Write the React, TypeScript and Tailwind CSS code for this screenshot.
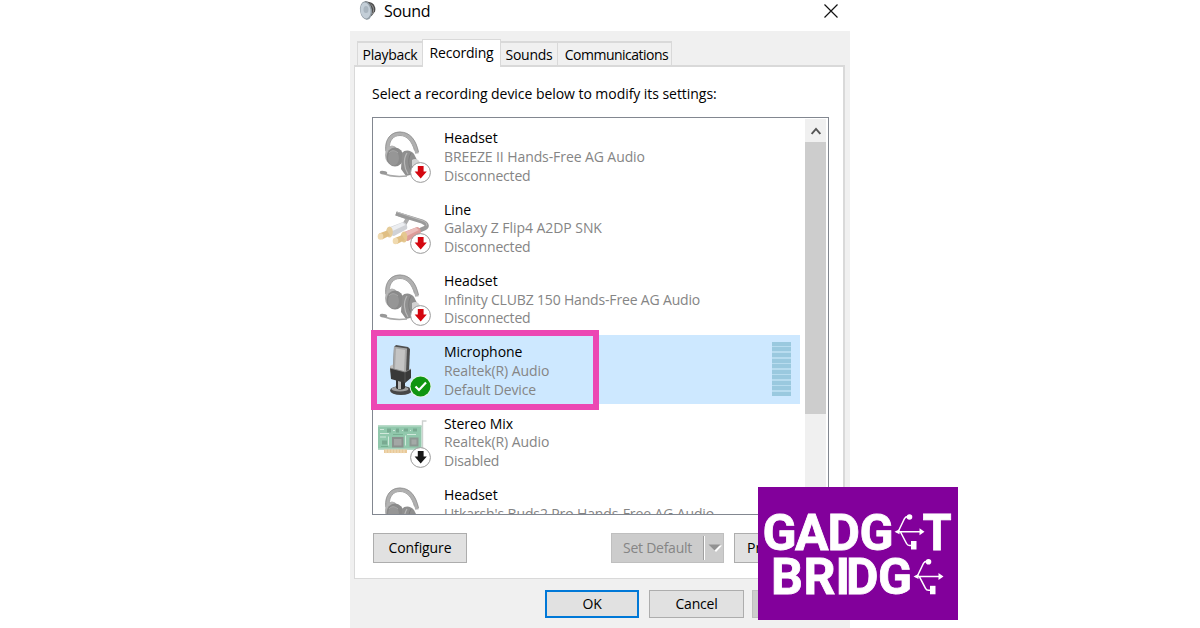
import React from 'react';

type DeviceIcon = 'headset' | 'line' | 'microphone' | 'card';
type DeviceStatus = 'disconnected' | 'default' | 'disabled';

interface Device {
  name: string;
  driver: string;
  state: string;
  icon: DeviceIcon;
  status?: DeviceStatus;
  driverTracking: string;
}

const devices: Device[] = [
  {
    name: 'Headset',
    driver: 'BREEZE II Hands-Free AG Audio',
    state: 'Disconnected',
    icon: 'headset',
    status: 'disconnected',
    driverTracking: 'tracking-[-0.09px]',
  },
  {
    name: 'Line',
    driver: 'Galaxy Z Flip4 A2DP SNK',
    state: 'Disconnected',
    icon: 'line',
    status: 'disconnected',
    driverTracking: 'tracking-[-0.06px]',
  },
  {
    name: 'Headset',
    driver: 'Infinity CLUBZ 150 Hands-Free AG Audio',
    state: 'Disconnected',
    icon: 'headset',
    status: 'disconnected',
    driverTracking: 'tracking-[-0.17px]',
  },
  {
    name: 'Microphone',
    driver: 'Realtek(R) Audio',
    state: 'Default Device',
    icon: 'microphone',
    status: 'default',
    driverTracking: 'tracking-[-0.08px]',
  },
  {
    name: 'Stereo Mix',
    driver: 'Realtek(R) Audio',
    state: 'Disabled',
    icon: 'card',
    status: 'disabled',
    driverTracking: 'tracking-[-0.08px]',
  },
  {
    name: 'Headset',
    driver: "Utkarsh's Buds2 Pro Hands-Free AG Audio",
    state: 'Disconnected',
    icon: 'headset',
    driverTracking: 'tracking-[-0.12px]',
  },
];

const HeadsetArt = () => (
  <g>
    <path d="M9.500 24C8 12 14 5.500 22 5.500c9 0 15 8 17 20" fill="none" stroke="#b0b0b0" strokeWidth="3.600" />
    <path d="M7.800 23C6.500 11 13 4 22 4c10 0 16 8 18.500 20" fill="none" stroke="#8b8b8b" strokeWidth="0.800" />
    <path d="M11.500 20C11 13 15 7.500 22 7.500c7 0 12 6 14.500 15" fill="none" stroke="#8f8f8f" strokeWidth="0.800" />
    <ellipse cx="14" cy="27" rx="7" ry="9.500" fill="#b3b3b3" />
    <ellipse cx="17" cy="29" rx="8.500" ry="9.500" fill="#8a8a8a" />
    <ellipse cx="15.500" cy="30" rx="5.500" ry="7.500" fill="#969696" />
    <path d="M11 25c2-3 6-3 9 0" fill="none" stroke="#a8a8a8" strokeWidth="1" />
    <path d="M24 25c3-4 9-3 12 1l3 6-3 14-8 2-5-7z" fill="#8f8f8f" />
    <path d="M29 25c-4 6-3 15 1 21" fill="none" stroke="#b8b8b8" strokeWidth="1.200" />
    <path d="M33 25c-3 5-3 12 0 17" fill="none" stroke="#7c7c7c" strokeWidth="0.900" />
    <path d="M34 32c3-2 7-1 8 3v4l-8-1z" fill="#d3d3d3" />
    <path d="M5 45c7 4 14 4 24 3" fill="none" stroke="#a9a9a9" strokeWidth="1.500" />
    <ellipse cx="5.500" cy="44.700" rx="3.800" ry="1.800" fill="#989898" transform="rotate(8 5.500 44.700)" />
  </g>
);

const LineArt = () => (
  <g>
    <path d="M18 14.500l12 4.500-4 7" fill="none" stroke="#ababab" strokeWidth="4" strokeLinejoin="round" />
    <path d="M18 14.500l26 8c5 2 6 5 3 6.500l-9 4" fill="none" stroke="#9a9a9a" strokeWidth="4.200" strokeLinejoin="round" />
    <path d="M19 13l25 8.500c4 1.500 5 3 4.500 5" fill="none" stroke="#bdbdbd" strokeWidth="1" />
    <path d="M12 28l13-5c3 0 5 4 4 7l-13 7c-4 0-6-6-4-9z" fill="#d0d2d6" />
    <path d="M12.500 28.500l12-5 3 2.500-13 6z" fill="#eceef1" />
    <path d="M26 33l13-5c3 0 5 4 3 7l-12 7c-5 0-6-6-4-9z" fill="#dd9b98" />
    <path d="M27 33l11-4.500 3 2.500-12 6z" fill="#ebbdba" />
    <ellipse cx="11.500" cy="33" rx="3.300" ry="5.500" fill="#e5cc9a" />
    <path d="M1 34.500l8-3 3 5-8 4z" fill="#e0bf83" />
    <ellipse cx="2.500" cy="37.500" rx="2.800" ry="3.200" fill="#f0dab0" />
    <ellipse cx="26" cy="38" rx="3.300" ry="5.500" fill="#e5c890" />
    <path d="M17 39l7-3 3 5-8 4z" fill="#e0bf83" />
    <ellipse cx="17.500" cy="42" rx="2.800" ry="3.200" fill="#f0dab0" />
  </g>
);

const MicrophoneArt = () => (
  <g>
    <ellipse cx="23" cy="48.500" rx="11" ry="4.500" fill="#474747" />
    <ellipse cx="22" cy="47" rx="8.500" ry="2.500" fill="#9d9d9d" />
    <path d="M18 38h9v8c-2 2-7 2-9 0z" fill="#303030" />
    <path d="M20 39h3v8h-3z" fill="#b5b5b5" />
    <path d="M12 24l4-2v10l-4-2z" fill="#c3c3c3" />
    <path d="M16 5l2-2 12 2 2 2-1 23-4 2-12-3z" fill="#4f4f4f" />
    <path d="M16 4.500l13 2-1 24-13-3z" fill="#a8a8a8" />
    <path d="M18 6.500l9 1.400-1 21-9-2z" fill="#c4c4c4" />
    <path d="M12 26l15 4 6-3v9l-6 5-14-4z" fill="#393939" />
    <path d="M12 26l15 4 6-3" fill="none" stroke="#8e8e8e" strokeWidth="0.800" />
    <path d="M27 30v10" stroke="#5c5c5c" strokeWidth="0.800" />
  </g>
);

const CardArt = () => (
  <g transform="translate(0 3.5)">
    <path d="M44.500 36V4.500h4" fill="none" stroke="#cdd1cf" strokeWidth="1.400" />
    <path d="M0 9h43.500v24H0z" fill="#91c8ac" />
    <path d="M0 9h43.500v1.500H0zM0 31.500h43.500V33H0z" fill="#a9d3bd" />
    <path d="M6 33h23v3.500H6z" fill="#e9c998" />
    <path d="M8 33v4M11 33v4M14 33v4M17 33v4M20 33v4M23 33v4M26 33v4" stroke="#f7ead2" strokeWidth="0.700" />
    <path d="M14 20.500h11.500V31H14z" fill="#8b918e" />
    <path d="M16 22.500h7.500V29H16z" fill="#a3a7a5" />
    <path d="M31.500 21h9v9h-9z" fill="#8d9893" />
    <path d="M33.500 23h5v5h-5z" fill="#a4aaa7" />
    <path d="M9 12h4v4H9zM18 12h3v4h-3zM26 12h4v3h-4zM35 12h4v3h-4zM4 24h5v4H4z" fill="#79aa91" />
    <path d="M2 13h4M2 17h9M27.500 19v10M10.500 20v9M15 14h2M24 14h1M32 14h1M2 20.500h6M29 18h9" stroke="#d0e8db" strokeWidth="1" />
    <path d="M3 30h7M15 18h10" stroke="#78b092" strokeWidth="1" />
  </g>
);

const StatusBadge = ({ status }: { status: DeviceStatus }) => {
  if (status === 'default') {
    return (
      <g>
        <circle cx="42.500" cy="44.500" r="10.800" fill="#e8f5e9" />
        <circle cx="42.500" cy="44.500" r="10" fill="#109510" />
        <path d="M37.500 44.500l3.500 3.500 7-7.500" fill="none" stroke="#fff" strokeWidth="2.200" />
      </g>
    );
  }
  return (
    <g>
      <circle cx="42.500" cy="44.500" r="9.900" fill="#fff" stroke="#9a9a9a" strokeWidth="1" />
      <path
        d="M39.800 38h5.800v5.500h3.200l-6.100 7-6.100-7h3.200z"
        fill={status === 'disconnected' ? '#d4060f' : '#171717'}
      />
    </g>
  );
};

const DevicePicture = ({ device }: { device: Device }) => (
  <svg width="58" height="58" viewBox="0 0 58 58" className="mt-[7px] shrink-0 overflow-visible">
    {device.icon === 'headset' && <HeadsetArt />}
    {device.icon === 'line' && <LineArt />}
    {device.icon === 'microphone' && <MicrophoneArt />}
    {device.icon === 'card' && <CardArt />}
    {device.status && <StatusBadge status={device.status} />}
  </svg>
);

const LevelMeter = () => (
  <div className="mt-[7px] mr-[9px] ml-auto flex h-[54px] w-[19px] flex-col justify-between bg-[#b8dcef]">
    {Array.from({ length: 10 }, (_, i) => (
      <span key={i} className="h-[4px] bg-[#9ac9df]" />
    ))}
  </div>
);

const DeviceRow = ({ device }: { device: Device }) => {
  const selected = device.status === 'default';
  return (
    <li className={`mb-[2.3px] flex h-[69px] w-[424px] shrink-0 pl-[2px] ${selected ? 'bg-[#cde8ff]' : ''}`}>
      <DevicePicture device={device} />
      <div className="pt-[8.4px] pl-[8px] text-[14px] leading-[18.7px] whitespace-nowrap text-[#858585]">
        <p className="tracking-[-0.07px] text-black">{device.name}</p>
        <p className={device.driverTracking}>{device.driver}</p>
        <p className="tracking-[-0.18px]">{device.state}</p>
      </div>
      {selected && <LevelMeter />}
    </li>
  );
};

const TitleBar = () => (
  <header className="flex h-[31px] items-start bg-white pl-[8px]">
    <svg width="19" height="22" viewBox="0 0 19 22" className="shrink-0">
      <path d="M7 1l6 1.500c4 2 5 6 4 9l-3 4-6 4z" fill="#4c4c4c" />
      <path d="M12.500 4c3 2 4 6 2 10" fill="none" stroke="#999" strokeWidth="1" />
      <ellipse cx="8" cy="10.500" rx="6" ry="9.300" fill="#929da5" transform="rotate(-8 8 10.500)" />
      <ellipse cx="7.500" cy="10.500" rx="5" ry="8" fill="#c3ced7" transform="rotate(-8 7.500 10.500)" />
      <ellipse cx="8" cy="9.500" rx="2.500" ry="3.500" fill="#a9b5bf" />
    </svg>
    <h1 className="ml-[7px] text-[16px] leading-[22px] tracking-[-0.3px]">Sound</h1>
    <svg width="14" height="14" viewBox="0 0 14 14" className="mt-[4px] mr-[12px] ml-auto">
      <path d="M0.500 0.500l13 13M13.500 0.500l-13 13" stroke="#111" strokeWidth="1.200" />
    </svg>
  </header>
);

const Tabs = () => (
  <nav className="flex h-[27px] items-end pl-[7px] text-[14px] whitespace-nowrap">
    <span className="mb-[1px] flex h-[24px] w-[65px] items-center justify-center border-t-2 border-l border-[#d9d9d9] tracking-[-0.3px]">
      Playback
    </span>
    <span className="z-10 -mb-px flex h-[28px] w-[79px] items-center justify-center border-x border-t border-[#d9d9d9] bg-white pb-[3px] tracking-[-0.2px]">
      Recording
    </span>
    <span className="mb-[1px] flex h-[24px] w-[57px] items-center justify-center border-t-2 border-r border-[#d9d9d9] tracking-[-0.25px]">
      Sounds
    </span>
    <span className="mb-[1px] flex h-[24px] w-[114px] items-center justify-center border-t-2 border-r border-[#d9d9d9] pl-[4px] tracking-[-0.5px]">
      Communications
    </span>
  </nav>
);

const ScrollBar = () => (
  <div className="mt-[1px] mr-[2px] ml-auto w-[21px] bg-[#f0f0f0]">
    <div className="flex h-[23px] items-center justify-center">
      <svg width="10" height="8" viewBox="0 0 10 8">
        <path d="M0.700 7L5 2l4.300 5" fill="none" stroke="#555" strokeWidth="1.900" />
      </svg>
    </div>
    <div className="h-[272px] bg-[#cdcdcd]" />
  </div>
);

// Three-pronged USB mark that stands in for the letter E
const UsbMark = ({ x, y }: { x: number; y: number }) => (
  <g transform={`translate(${x} ${y})`} stroke="#fff" fill="none" strokeWidth="1.500">
    <path d="M2 17.700h24M4 17L10 4.500q1-2 4-2M6 18l6 11.500q1 2 3 2h4" />
    <path d="M25 14.200l5 3.500-5 3.500zM0 17.700l5-2.500v5z" fill="#fff" stroke="none" />
    <circle cx="15" cy="3" r="2.800" fill="#fff" stroke="none" />
    <path d="M16.500 27h5.500v8.500h-5.500z" fill="#fff" stroke="none" />
  </g>
);

const BrandLogo = () => (
  <svg width="200" height="133" viewBox="0 0 200 133" className="absolute top-[487px] left-[758px] z-20 bg-[#82009b]">
    <g fill="#fff" stroke="#fff" strokeWidth="0.800" fontFamily="Roboto, sans-serif" fontWeight="700" fontSize="50">
      <text x="4.500 37 69.500 101.500" y="63">GADG</text>
      <text x="0" y="63" transform="translate(164.500 0) scale(0.94 1)">T</text>
      <text x="13 45.500 77.500 88 120" y="107">BRIDG</text>
    </g>
    <UsbMark x={136.5} y={27} />
    <UsbMark x={155.500} y={71.800} />
  </svg>
);

const App: React.FC = () => {
  return (
    <div className="relative h-[628px] w-[1200px] overflow-hidden bg-white font-['Open_Sans','Noto_Sans',sans-serif] text-black">
      <main className="ml-[350px] flex h-[628px] w-[500px] flex-col bg-[#f0f0f0]">
        <TitleBar />

        <div className="pt-[8px]">
          <Tabs />
        </div>

        <section className="-mt-px mr-[5px] ml-[4px] flex h-[514px] shrink-0 flex-col border-t-2 border-r-2 border-b border-l border-[#d9d9d9] bg-white pl-[17px]">
          <p className="mt-[16px] text-[14px] leading-[22px] tracking-[-0.05px]">
            Select a recording device below to modify its settings:
          </p>

          <div className="mt-[12px] flex h-[398px] w-[457px] shrink-0 overflow-hidden border border-[#828790]">
            <ul className="flex h-[396px] flex-col overflow-hidden pt-[3px] pl-[3px]">
              {devices.map((device, index) => (
                <DeviceRow key={index} device={device} />
              ))}
            </ul>
            <ScrollBar />
          </div>

          <div className="mt-[18px] ml-px flex h-[30px] text-[14px]">
            <button className="w-[94px] border border-[#adadad] bg-[#e1e1e1] pb-px tracking-[-0.1px]">Configure</button>
            <button className="ml-[144px] flex w-[113px] items-center border border-[#bfbfbf] bg-[#cccccc] text-[#858585]">
              <span className="w-[91px] pb-px text-center tracking-[-0.25px]">Set Default</span>
              <span className="h-[24px] w-[2px] border-r border-l border-r-white border-l-[#a0a0a0]" />
              <svg width="14" height="8" viewBox="0 0 14 8" className="ml-[3px]">
                <path d="M2 1.500h12L8 8z" fill="#fff" />
                <path d="M0.500 0.500h12l-6 6z" fill="#929292" />
              </svg>
            </button>
            <button className="ml-[10px] w-[94px] border border-[#adadad] bg-[#e1e1e1] pb-px">Properties</button>
          </div>
        </section>

        <footer className="mt-[11px] flex h-[28px] shrink-0 pl-[195px] text-[14px]">
          <button className="w-[94px] border-2 border-[#0078d7] bg-[#e1e1e1] pb-px tracking-[-0.3px]">OK</button>
          <button className="ml-[10px] w-[95px] border border-[#adadad] bg-[#e1e1e1] pb-px tracking-[-0.2px]">
            Cancel
          </button>
          <button className="ml-[8px] w-[90px] border border-[#bfbfbf] bg-[#cccccc]" aria-label="Apply" />
        </footer>
      </main>

      {/* Highlight around the default microphone */}
      <div className="absolute top-[330px] left-[371px] h-[80px] w-[228px] border-[6px] border-[#ec47b3]" />
      <BrandLogo />
    </div>
  );
};

export default App;
